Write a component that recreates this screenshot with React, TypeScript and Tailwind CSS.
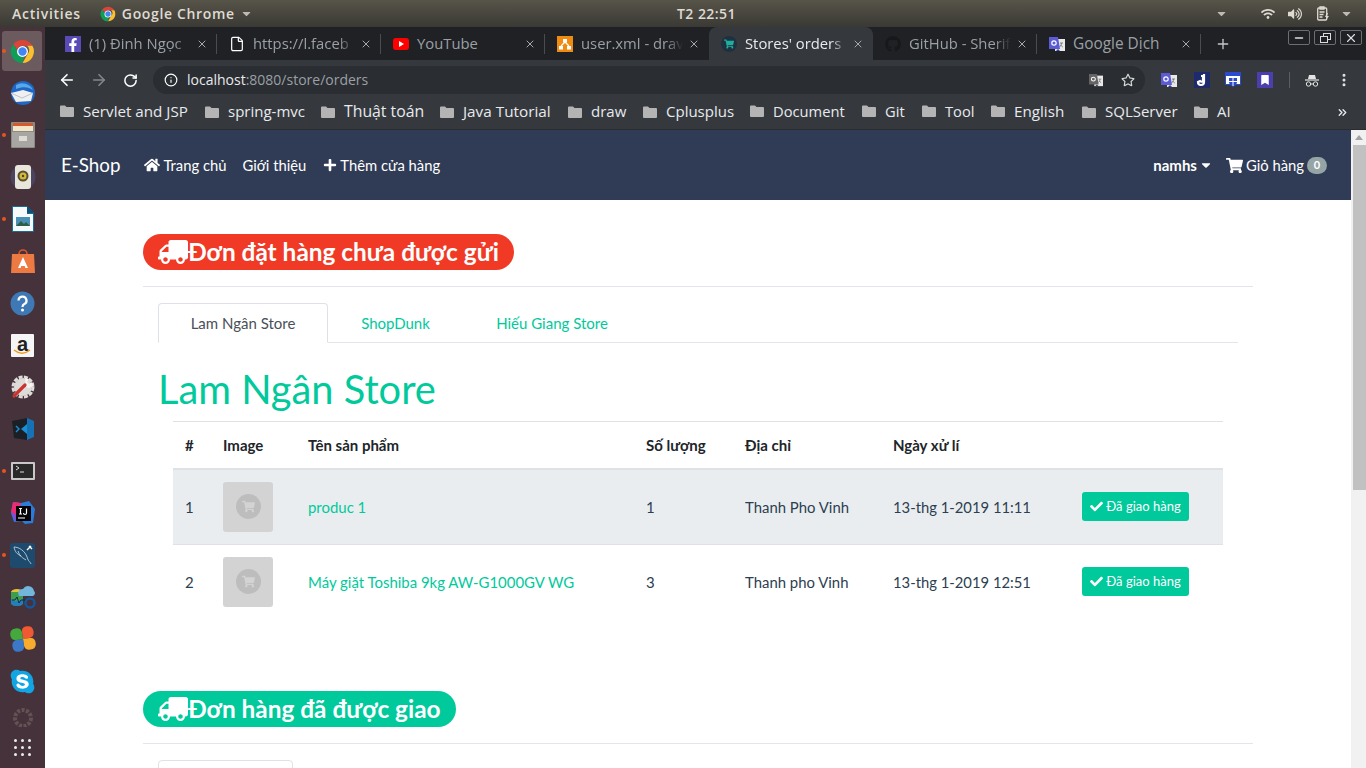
import React from 'react';
import { FaTruck, FaHome, FaPlus, FaShoppingCart, FaCheck, FaFacebookF, FaGithub, FaSkype, FaRegStar, FaBookmark, FaWifi, FaVolumeUp, FaCaretDown } from 'react-icons/fa';
import { X, ArrowLeft, ArrowRight, RotateCw, Info, Plus, Minus, File, MoreVertical, ChevronsRight } from 'lucide-react';

const Chrome = ({ s = 30 }: { s?: number }) => (
  <svg width={s} height={s} viewBox="0 0 48 48">
    <path d="M24 2a22 22 0 0 1 19.05 11H24a11 11 0 0 0-10.4 7.4L6.6 9.9A22 22 0 0 1 24 2z" fill="#db4437" />
    <path d="M43.05 13A22 22 0 0 1 24 46l10-17.2A11 11 0 0 0 33 13z" fill="#fbc02d" />
    <path d="M24 46A22 22 0 0 1 6.6 9.9l10 17.3A11 11 0 0 0 27 34.6L24 46z" fill="#0f9d58" />
    <circle cx="24" cy="24" r="10.5" fill="#fff" />
    <circle cx="24" cy="24" r="8" fill="#4285f4" />
  </svg>
);

const Translate = ({ s = 16 }: { s?: number }) => (
  <svg width={s} height={s} viewBox="0 0 16 16">
    <rect x="6" y="3" width="10" height="12" fill="#e8e8e8" />
    <path d="M0 1h9l2 12H0z" fill="#5b5bd6" />
    <path d="M9 13l-2 2h4z" fill="#3a3a9a" />
    <circle cx="5" cy="7" r="2.2" fill="none" stroke="#fff" strokeWidth="1.2" />
    <path d="M11 7h3M12.5 7c0 2-1 3-2 4M11.5 9c.6.8 1.3 1.4 2.3 2" stroke="#666" strokeWidth=".8" fill="none" />
  </svg>
);

const Dock = () => {
  const Slot = ({ children, dot, active, h = 'h-[42px]' }: { children: React.ReactNode; dot?: boolean; active?: boolean; h?: string }) => (
    <div className={`relative ${h} w-[45px] flex items-center justify-center shrink-0`}>
      {active && <div className="absolute left-[2px] top-[1px] h-[40px] w-[40px] rounded-[3px] bg-[#6b5a5e]" />}
      {dot && <div className="absolute left-[2px] top-[19px] h-[4px] w-[4px] rounded-full bg-[#e95420]" />}
      <div className="relative flex items-center justify-center">{children}</div>
    </div>
  );
  const petal = 'M0 0L0-7Q0-12 5.500-12Q11.500-12 11.500-6Q11.500 0 5.500 0Z';
  return (
    <div className="w-[45px] shrink-0 bg-[#46323a] flex flex-col pt-[3px] overflow-hidden">
      <Slot active dot><Chrome s={25} /></Slot>
      <Slot>
        <svg width="26" height="26" viewBox="0 0 26 26"><circle cx="13" cy="13" r="12" fill="#1f67c4" /><path d="M6 5a12 12 0 0 1 17 5c-4-3-10-4-17-1z" fill="#58a7e8" /><path d="M1 13l12-3 10 3-2 8-15 1z" fill="#f0f0f0" /><path d="M1 13l11 5 11-5" fill="none" stroke="#b9c3cf" /></svg>
      </Slot>
      <Slot dot>
        <svg width="24" height="26" viewBox="0 0 24 26"><rect x="0" y="0" width="24" height="26" rx="1" fill="#8c8a85" /><rect x="2" y="1" width="20" height="8" fill="#d8572b" /><rect x="2" y="4" width="20" height="5" fill="#f4e6c8" /><rect x="1" y="10" width="22" height="15" fill="#a8a6a2" /><rect x="8" y="14" width="8" height="5" fill="#dedbd5" /></svg>
      </Slot>
      <Slot>
        <svg width="26" height="26" viewBox="0 0 26 26"><circle cx="13" cy="13" r="12.5" fill="#4b4460" /><rect x="5" y="1" width="16" height="24" rx="3" fill="#e9e7dc" /><circle cx="13" cy="12" r="5.5" fill="#56512a" /><circle cx="13" cy="12" r="3.5" fill="#d6b83a" /><circle cx="13" cy="12" r="1.2" fill="#444" /></svg>
      </Slot>
      <Slot dot>
        <svg width="22" height="26" viewBox="0 0 22 26"><path d="M0 0h15l7 7v19H0z" fill="#1a6a94" /><path d="M1 1h14v7h6v17H1z" fill="#f6f8f9" /><path d="M15 0l7 7h-7z" fill="#0d5177" /><rect x="4" y="11" width="14" height="9" fill="#4a8fb5" /><path d="M4 20l5-5 3 3 2-2 4 4z" fill="#2d5d45" /></svg>
      </Slot>
      <Slot>
        <svg width="24" height="26" viewBox="0 0 24 26"><path d="M8 6a4 4 0 0 1 8 0" stroke="#d9562a" strokeWidth="1.6" fill="none" /><path d="M1 6h22l1 19H0z" fill="#ec7a42" /><path d="M12 9l5 11h-2.600l-.7-2h-3.400l-.7 2H7z" fill="#fff" /></svg>
      </Slot>
      <Slot>
        <svg width="25" height="25" viewBox="0 0 25 25"><circle cx="12.5" cy="12.500" r="12" fill="#3f79b5" /><path d="M8.500 9.500a4 4 0 1 1 5.500 3.800c-1 .5-1.500 1-1.500 2.700" stroke="#fff" strokeWidth="2.200" fill="none" /><circle cx="12.500" cy="19" r="1.500" fill="#fff" /></svg>
      </Slot>
      <Slot>
        <div className="relative w-[23px] h-[23px] rounded-[1px] bg-[#f5f5f5] flex justify-center overflow-hidden">
          <span className="font-['Liberation_Sans',sans-serif] font-bold text-[20px] leading-[20px] text-[#222]">a</span>
          <svg className="absolute left-[2px] top-[15px]" width="19" height="6" viewBox="0 0 19 6"><path d="M1 1c5 4 11 4 16 0" stroke="#f09a20" strokeWidth="1.500" fill="none" /></svg>
        </div>
      </Slot>
      <Slot>
        <svg width="24" height="24" viewBox="0 0 24 24"><circle cx="12" cy="12" r="10" fill="none" stroke="#dedcd9" strokeWidth="3" strokeDasharray="4 1.300" /><circle cx="12" cy="12" r="9" fill="#dedcd9" /><path d="M14 3l4 1-2 3 2 2 3-2 1 4-4 2-3-1z" fill="#f4f3f1" /><path d="M3 21L14 10" stroke="#c9342f" strokeWidth="3.200" strokeLinecap="round" /></svg>
      </Slot>
      <Slot>
        <svg width="24" height="24" viewBox="0 0 24 24"><path d="M1 4l15-3v22L3 21z" fill="#1b2027" /><path d="M16 1l7 3v16l-7 3z" fill="#1672b5" /><path d="M16 7v10l-6-5z" fill="#1a8fd6" /><path d="M5 9l3 3-3 3" stroke="#1a8fd6" strokeWidth="1.400" fill="none" /></svg>
      </Slot>
      <Slot dot>
        <div className="w-[24px] h-[18px] border-2 border-[#c8c8c8] bg-[#2a2a2a] rounded-[1px] pl-[2px] pt-[1px]">
          <svg width="14" height="11" viewBox="0 0 14 11"><path d="M1 1l3 2-3 2" stroke="#ddd" fill="none" /><path d="M5 7h4" stroke="#ddd" /></svg>
        </div>
      </Slot>
      <Slot>
        <svg width="26" height="26" viewBox="0 0 26 26"><path d="M3 2l8 1 8-2 6 8-2 14-8 1-3-3-8 1-3-9z" fill="#2a7bdc" /><path d="M3 2l8 1-3 13-7-4z" fill="#ed2b74" /><path d="M1 12l7 4-2 6z" fill="#8a4bd1" /><rect x="6" y="6" width="15" height="15" fill="#050505" /><path d="M8 18h7" stroke="#fff" /><path d="M9 8.500h3M10.500 8.500v5.500M9 14h3M16.500 8.500v4.500a1.500 1.500 0 0 1-3 0" stroke="#fff" strokeWidth="1.200" fill="none" /></svg>
      </Slot>
      <Slot dot>
        <svg width="25" height="25" viewBox="0 0 25 25"><rect width="25" height="25" rx="3" fill="#1e4a6d" /><path d="M4 4c5 0 11 4 13 10s3 4 4 7M4 4c1 5 3 7 7 9M8 8c2 6 5 7 8 9" stroke="#cfe0ea" strokeWidth=".8" fill="none" /><path d="M17 7l4-4M19 3l3 3" stroke="#fff" strokeWidth="1.400" /></svg>
      </Slot>
      <Slot>
        <svg width="26" height="25" viewBox="0 0 26 25"><ellipse cx="7" cy="7" rx="6" ry="3" fill="#e6c23a" /><path d="M1 7v11c0 2 3 3 6 3s6-1 6-3V7z" fill="#3f9e4d" /><path d="M1 13c0 2 3 3 6 3s6-1 6-3v5c0 2-3 3-6 3s-6-1-6-3z" fill="#247dbd" /><path d="M8 8a5 5 0 0 1 5-4 6 6 0 0 1 11 2 3 3 0 0 1-1 5H9z" fill="#72b6dc" /><circle cx="20" cy="18" r="4.500" fill="none" stroke="#15569c" strokeWidth="2.500" /><path d="M2 15h3l2-3 2 6 2-3h4" stroke="#0d2f4f" fill="none" /></svg>
      </Slot>
      <Slot>
        <svg width="26" height="26" viewBox="-13 -13 26 26">
          <g transform="rotate(-8)">
            <path d={petal} fill="#ef5a35" />
            <path d={petal} fill="#f8ac2e" transform="rotate(90)" />
            <path d={petal} fill="#3b78c8" transform="rotate(180)" />
            <path d={petal} fill="#45a83d" transform="rotate(270)" />
          </g>
        </svg>
      </Slot>
      <Slot>
        <div className="relative h-[27px] w-[27px] flex items-center justify-center">
          <div className="absolute inset-[6px] bg-white" />
          <FaSkype className="relative text-[#11a5e4] text-[27px]" />
        </div>
      </Slot>
      <Slot h="h-[30px]">
        <svg className="opacity-30" width="24" height="20" viewBox="0 0 24 20"><circle cx="12" cy="11" r="8" fill="none" stroke="#a59b95" strokeWidth="4" strokeDasharray="3 1.500" /></svg>
      </Slot>
      <div className="h-[30px] w-[45px] flex items-center justify-center shrink-0">
        <div className="grid grid-cols-3 gap-[4px]">
          {Array.from({ length: 9 }).map((_, i) => <div key={i} className="h-[3px] w-[3px] rounded-full bg-[#ececec]" />)}
        </div>
      </div>
    </div>
  );
};

const tabs: { t: string; icon: React.ReactNode; active?: boolean; fade?: boolean }[] = [
  { t: '(1) Đinh Ngọc', fade: true, icon: <div className="h-4 w-4 bg-[#5a4ab5] flex items-end justify-end overflow-hidden"><FaFacebookF className="text-white text-[14px] translate-x-[-1px]" /></div> },
  { t: 'https://l.faceb', fade: true, icon: <File size={16} className="text-white" strokeWidth={1.8} /> },
  { t: 'YouTube', icon: <svg width="16" height="12" viewBox="0 0 16 12"><rect width="16" height="12" rx="3" fill="#f00" /><path d="M6 3l5 3-5 3z" fill="#fff" /></svg> },
  { t: 'user.xml - drav', fade: true, icon: <svg width="16" height="16" viewBox="0 0 16 16"><rect width="16" height="16" fill="#ef8a13" /><rect x="6" y="3" width="4" height="3.500" fill="#fff" /><rect x="2" y="10" width="4" height="3.500" fill="#fff" /><rect x="10" y="10" width="4" height="3.500" fill="#fff" /><path d="M8 6L4 10M8 6l4 4" stroke="#fff" strokeWidth="1.200" /></svg> },
  { t: "Stores' orders", active: true, fade: true, icon: <div className="h-4 w-4 rounded-full bg-[#1f3040] flex items-center justify-center"><FaShoppingCart className="text-[#1fae9c] text-[10px]" /></div> },
  { t: 'GitHub - Sherif', fade: true, icon: <FaGithub className="text-[#17181a] text-[16px]" /> },
  { t: 'Google Dịch', icon: <Translate /> },
];

const bookmarks: [string, number, string][] = [
  ['Servlet and JSP', 145, 'text-[15.2px]'], ['spring-mvc', 116, 'text-[15px]'], ['Thuật toán', 119, 'text-[15.8px]'], ['Java Tutorial', 128, 'text-[15.3px]'], ['draw', 75, 'text-[15px]'], ['Cplusplus', 107, 'text-[15px]'],
  ['Document', 112, 'text-[14.7px]'], ['Git', 60, 'text-[14.7px]'], ['Tool', 69, 'text-[14.7px]'], ['English', 91, 'text-[15.2px]'], ['SQLServer', 112, 'text-[15px]'], ['AI', 40, 'text-[15px]'],
];

const Folder = () => (
  <svg width="14" height="12" viewBox="0 0 14 12" className="shrink-0"><path d="M0 1.500A1 1 0 0 1 1 .5h4l1.500 1.500H13a1 1 0 0 1 1 1V11a1 1 0 0 1-1 1H1a1 1 0 0 1-1-1z" fill="#b4b4b4" /></svg>
);

const ChromeUI = () => (
  <div className="shrink-0 font-['Open_Sans',sans-serif]">
    <div className="h-[33px] bg-[#202124] flex relative pl-[8px]">
      {tabs.map((t, i) => (
        <div key={i} className={`relative h-[33px] w-[164px] shrink-0 flex items-center pl-[12px] ${t.active ? 'bg-[#35393e] rounded-t-[8px]' : ''}`}>
          <div className="w-[16px] h-[16px] flex items-center justify-center shrink-0">{t.icon}</div>
          <div className={`ml-[8px] w-[102px] whitespace-nowrap ${t.fade ? '[mask-image:linear-gradient(to_right,black_84%,transparent_100%)]' : ''} ${t.t === 'Google Dịch' ? 'text-[15.4px]' : 'text-[14.8px]'} ${t.active ? 'text-[#e8eaed]' : 'text-[#9aa0a6]'}`}>{t.t}</div>
          <X size={12} strokeWidth={2} className="text-[#a6a9ad] ml-[5px] shrink-0" />
          {!t.active && i !== 3 && <div className="absolute right-0 top-[7px] h-[20px] w-px bg-[#4a4c50]" />}
        </div>
      ))}
      <Plus size={16} strokeWidth={2} className="text-[#c4c6c9] ml-[14px] mt-[9px]" />
      <div className="ml-auto mr-[4px] mt-[3px] flex gap-[4px]">
        {[<Minus key="a" size={12} strokeWidth={3} />, <svg key="b" width="11" height="10" viewBox="0 0 11 10" fill="none" stroke="currentColor"><rect x="3.500" y=".5" width="7" height="6" /><rect x=".5" y="3.500" width="7" height="6" fill="#202124" /></svg>, <X key="c" size={14} strokeWidth={2} />].map((ic, i) => (
          <div key={i} className="h-[15px] w-[22px] border border-[#6d6e70] rounded-[2px] flex items-center justify-center text-[#dcdcdc]">{ic}</div>
        ))}
      </div>
    </div>
    <div className="h-[35px] pt-[5px] bg-[#35393e] flex items-center relative">
      <ArrowLeft size={18} strokeWidth={2.200} className="text-white ml-[13px]" />
      <ArrowRight size={18} strokeWidth={2.200} className="text-[#84868a] ml-[14px]" />
      <RotateCw size={15} strokeWidth={2.400} className="text-white ml-[15px]" />
      <div className="ml-[15px] h-[28px] w-[992px] rounded-full bg-[#2a2d31] flex items-center pl-[11px]">
        <Info size={14} strokeWidth={2} className="text-white" />
        <span className="ml-[9px] -mt-[1px] text-[14px] text-[#e8eaed]">localhost<span className="text-[#9aa0a6]">:8080/store/orders</span></span>
        <div className="ml-auto mr-[10px] flex items-center gap-[18px]">
          <div className="grayscale"><Translate s={14} /></div>
          <FaRegStar className="text-[#d9dadb] text-[14px]" />
        </div>
      </div>
      <div className="ml-[16px]"><Translate s={16} /></div>
      <div className="ml-[17px] h-[16px] w-[16px] bg-[#1d2a6d] text-white flex items-center justify-center">
        <svg width="12" height="14" viewBox="0 0 12 14"><path d="M8 1v8a3 3 0 0 1-6 0l2-1a2 2 0 0 0 3 0V3H5" stroke="#fff" strokeWidth="2.200" fill="none" /></svg>
      </div>
      <div className="ml-[15px]">
        <svg width="16" height="16" viewBox="0 0 16 16"><rect x=".5" y=".5" width="15" height="12" fill="#fff" stroke="#2a4ad0" /><rect x="1" y="1" width="14" height="3" fill="#2a4ad0" /><path d="M4 6h8v4c0 2-2 4-4 5-2-1-4-3-4-5z" fill="#2a4ad0" /><path d="M8 6v8M4 9.500h8" stroke="#fff" /></svg>
      </div>
      <div className="ml-[16px] h-[16px] w-[16px] bg-[#4b3fb0] flex items-center justify-center"><FaBookmark className="text-white text-[10px]" /></div>
      <div className="ml-[16px] h-[16px] w-px bg-[#5b5e62]" />
      <div className="ml-[15px]">
        <svg width="14" height="14" viewBox="0 0 14 14" fill="none" stroke="#e4e4e4"><path d="M3 6l1-4h6l1 4z" fill="#e4e4e4" stroke="none" /><path d="M0 7h14" strokeWidth="1.200" /><circle cx="3.500" cy="11" r="2.200" /><circle cx="10.500" cy="11" r="2.200" /><path d="M5.700 11h2.600" /></svg>
      </div>
      <MoreVertical size={16} strokeWidth={2.500} className="text-[#e4e4e4] ml-[17px]" />
    </div>
    <div className="h-[35px] bg-[#35393e] flex items-center pl-[15px] pb-px relative border-b border-[#2a2c2f]">
      {bookmarks.map(([t, w, f]) => (
        <div key={t} style={{ width: w }} className="shrink-0 flex items-center">
          <Folder />
          <span className={`ml-[9px] ${f} text-[#e8eaed] whitespace-nowrap`}>{t}</span>
        </div>
      ))}
      <ChevronsRight size={13} strokeWidth={2.500} className="absolute right-[17px] top-[11px] text-[#e8eaed]" />
    </div>
  </div>
);

const TopBar = () => (
  <div className="h-[27px] shrink-0 bg-gradient-to-b from-[#575449] to-[#3a3934] flex items-center relative font-['Open_Sans',sans-serif] text-[14px] font-semibold text-[#dfdbd2]">
    <span className="ml-[12px] tracking-[0.75px]">Activities</span>
    <span className="ml-[19px]"><Chrome s={16} /></span>
    <span className="ml-[6px] tracking-[0.65px]">Google Chrome</span>
    <FaCaretDown className="ml-[5px] text-[13px] text-[#bdbab1]" />
    <span className="absolute left-[677px] tracking-[0.45px]">T2 22:51</span>
    <div className="ml-auto flex items-center mr-[13px] text-[#dfdbd2]">
      <FaCaretDown className="text-[13px] text-[#bdbab1]" />
      <FaWifi className="ml-[33px] text-[14px]" />
      <FaVolumeUp className="ml-[13px] text-[14px]" />
      <svg className="ml-[15px]" width="13" height="15" viewBox="0 0 13 15" fill="none" stroke="#dfdbd2" strokeWidth="1.300"><rect x=".7" y="2" width="9" height="12" rx="1" /><path d="M3 1h4v2H3zM2.500 6h5M2.500 8.500h4M2.500 11h3" /><path d="M10 7l-2 4h2l-1 3 3-4h-2l1-3z" fill="#dfdbd2" stroke="none" /></svg>
      <FaCaretDown className="ml-[10px] text-[13px] text-[#bdbab1]" />
    </div>
  </div>
);

const Pill = ({ color, text }: { color: string; text: string }) => (
  <div className={`h-[36px] inline-flex items-center rounded-[18px] pl-[15px] pr-[15px] text-white text-[24.4px] font-bold leading-none ${color}`}>
    <FaTruck className="text-[30px] -scale-x-100 shrink-0" />
    <span>{text}</span>
  </div>
);

const Thumb = () => (
  <div className="h-[50px] w-[50px] rounded-[3px] bg-[#d3d3d3] flex items-center justify-center">
    <div className="h-[25px] w-[25px] rounded-full bg-[#bdbdbd] flex items-center justify-center">
      <FaShoppingCart className="text-[#d3d3d3] text-[13px]" />
    </div>
  </div>
);

const rows = [
  { n: 1, name: 'produc 1', q: 1, addr: 'Thanh Pho Vinh', d: '13-thg 1-2019 11:11', bg: 'bg-[#eaedf0]' },
  { n: 2, name: 'Máy giặt Toshiba 9kg AW-G1000GV WG', q: 3, addr: 'Thanh pho Vinh', d: '13-thg 1-2019 12:51', bg: '' },
];

const Page = () => (
  <div className="flex-1 min-h-0 flex overflow-hidden font-['Lato',sans-serif] text-[15px] text-[#2c3e50]">
    <div className="w-[1306px] shrink-0 bg-white overflow-hidden">
      <nav className="h-[70px] bg-[#303c55] flex items-center text-white pl-[16px] pr-[24px] text-[14.8px]">
        <span className="text-[18.75px] mr-[24px]">E-Shop</span>
        <span className="flex items-center gap-[3px]"><FaHome className="text-[16px]" />Trang chủ</span>
        <span className="ml-[16px]">Giới thiệu</span>
        <span className="ml-[17px] flex items-center gap-[3px]"><FaPlus className="text-[14px]" />Thêm cửa hàng</span>
        <span className="ml-auto font-bold flex items-center gap-[2px] text-[15px]">namhs<FaCaretDown className="text-[14px]" /></span>
        <span className="ml-[13px] flex items-center gap-[3px] text-[14.8px]"><FaShoppingCart className="text-[17px]" />Giỏ hàng</span>
        <span className="ml-[3px] h-[17px] w-[20px] rounded-full bg-[#95a5a6] text-[11px] font-bold flex items-center justify-center">0</span>
      </nav>
      <div className="w-[1140px] mx-auto px-[15px] pt-[34px]">
        <Pill color="bg-[#f03a26]" text="Đơn đặt hàng chưa được gửi" />
        <div className="h-px bg-[#e3e5ea] mt-[13px]" />
        <div className="mx-[15px] mt-[16px]">
          <div className="h-[40px] flex border-b border-[#e3e5ea]">
            <div className="h-[40px] w-[170px] border border-[#dee2e6] border-b-white bg-white rounded-t-[4px] flex items-center justify-center text-[#495057] pt-px">Lam Ngân Store</div>
            <div className="h-[39px] w-[135px] flex items-center justify-center text-[#00c99b] pt-[2px]">ShopDunk</div>
            <div className="h-[39px] w-[178px] flex items-center justify-center text-[#00c99b] pt-[2px]">Hiếu Giang Store</div>
          </div>
          <div className="h-[78px] flex items-center text-[39.8px] text-[#00c99b] leading-none pt-[14px]">Lam Ngân Store</div>
          <table className="mx-[15px] w-[1050px] table-fixed border-collapse text-left">
            <colgroup>
              <col className="w-[37px]" /><col className="w-[85px]" /><col className="w-[338px]" /><col className="w-[99px]" /><col className="w-[148px]" /><col className="w-[189px]" /><col />
            </colgroup>
            <thead>
              <tr className="h-[48px] border-t border-[#dee2e6] border-b-2 text-[#212529]">
                {['#', 'Image', 'Tên sản phẩm', 'Số lượng', 'Địa chỉ', 'Ngày xử lí', ''].map((h, i) => (
                  <th key={i} className={`${i === 0 ? 'pl-[12px] pr-[13px]' : 'px-[13px]'} font-bold`}>{h}</th>
                ))}
              </tr>
            </thead>
            <tbody>
              {rows.map((r) => (
                <tr key={r.n} className={`h-[75px] border-t border-[#dee2e6] ${r.bg}`}>
                  <td className="pl-[12px] pr-[13px]">{r.n}</td>
                  <td className="px-[13px]"><Thumb /></td>
                  <td className="px-[13px] text-[#00c99b] whitespace-nowrap text-[14.95px]">{r.name}</td>
                  <td className="px-[13px]">{r.q}</td>
                  <td className="px-[13px] whitespace-nowrap text-[14.9px]">{r.addr}</td>
                  <td className="px-[13px] whitespace-nowrap text-[14.8px]">{r.d}</td>
                  <td className="px-[13px]">
                    <div className="h-[29px] w-[107px] rounded-[3px] bg-[#00c99b] text-white text-[13px] flex items-center justify-center gap-[3px]"><FaCheck className="text-[13px]" />Đã giao hàng</div>
                  </td>
                </tr>
              ))}
            </tbody>
          </table>
        </div>
        <div className="mt-[72px]"><Pill color="bg-[#00c99b]" text="Đơn hàng đã được giao" /></div>
        <div className="h-px bg-[#e3e5ea] mt-[13px]" />
        <div className="mx-[15px] mt-[16px] h-[40px] w-[135px] border border-[#dee2e6] rounded-t-[4px]" />
      </div>
    </div>
    <div className="w-[15px] shrink-0 bg-[#f1f1f1] flex flex-col items-center">
      <div className="h-[15px] flex items-center justify-center">
        <div className="w-0 h-0 border-x-[4px] border-x-transparent border-b-[5px] border-b-[#a3a3a3]" />
      </div>
      <div className="w-[13px] h-[345px] ml-[2px] bg-[#c1c1c1]" />
    </div>
  </div>
);

export default function App() {
  return (
    <div className="h-screen w-screen overflow-hidden flex flex-col bg-[#46323a]">
      <TopBar />
      <div className="flex-1 min-h-0 flex">
        <Dock />
        <div className="flex-1 min-w-0 flex flex-col">
          <ChromeUI />
          <Page />
        </div>
      </div>
    </div>
  );
}
